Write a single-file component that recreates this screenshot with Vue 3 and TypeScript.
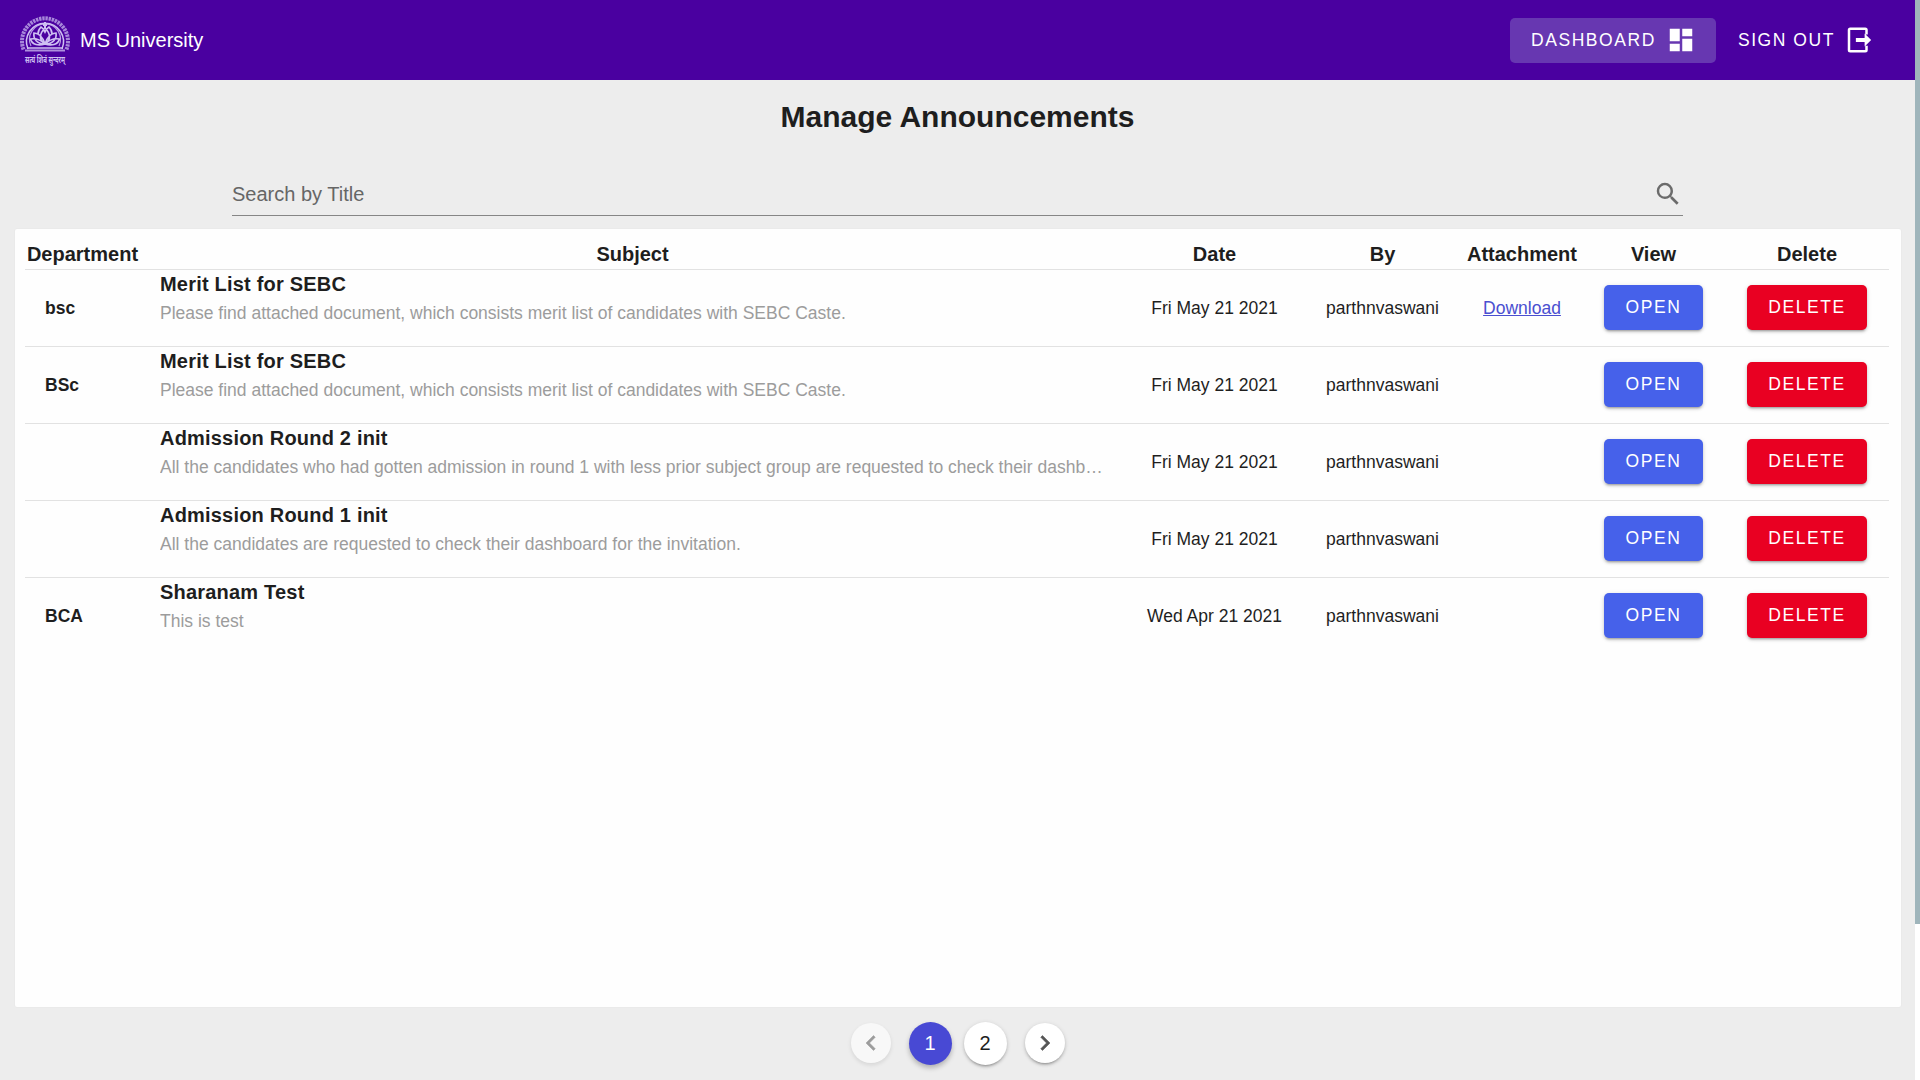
<script setup lang="ts">
import { ref } from 'vue'

interface Announcement {
  department: string
  title: string
  body: string
  date: string
  by: string
  attachment?: boolean
}

const search = ref('')
const page = ref(1)
const headers = ['Department', 'Subject', 'Date', 'By', 'Attachment', 'View', 'Delete']

const announcements: Announcement[] = [
  { department: 'bsc', title: 'Merit List for SEBC', body: 'Please find attached document, which consists merit list of candidates with SEBC Caste.', date: 'Fri May 21 2021', by: 'parthnvaswani', attachment: true },
  { department: 'BSc', title: 'Merit List for SEBC', body: 'Please find attached document, which consists merit list of candidates with SEBC Caste.', date: 'Fri May 21 2021', by: 'parthnvaswani' },
  { department: '', title: 'Admission Round 2 init', body: 'All the candidates who had gotten admission in round 1 with less prior subject group are requested to check their dashb…', date: 'Fri May 21 2021', by: 'parthnvaswani' },
  { department: '', title: 'Admission Round 1 init', body: 'All the candidates are requested to check their dashboard for the invitation.', date: 'Fri May 21 2021', by: 'parthnvaswani' },
  { department: 'BCA', title: 'Sharanam Test', body: 'This is test', date: 'Wed Apr 21 2021', by: 'parthnvaswani' },
]
</script>

<template>
  <div class="app">
    <div class="page">
      <header class="bar">
        <svg class="logo" viewBox="0 0 52 54" fill="none" stroke="#cfc0f2">
          <path d="M4.500 37.500 A23 23 0 1 1 47.500 37.500" stroke-width="4" stroke-dasharray="2.400 .8" opacity=".7" />
          <path d="M9 37 A18.500 18.500 0 1 1 43 37" stroke-width="1.500" />
          <path d="M12 34 A15.500 15.500 0 1 1 40 34" stroke-width="1.200" opacity=".8" />
          <path d="M8 36H44M6 38.500H46" stroke-width="2.200" opacity=".75" />
          <path d="M26 32C20 28 20 22 26 16C32 22 32 28 26 32ZM26 32C18 32 14 27 15 21C20 21 24 26 26 32ZM26 32C34 32 38 27 37 21C32 21 28 26 26 32ZM26 32C20 34 13 33 11.500 27C17 26 22 28 26 32ZM26 32C32 34 39 33 40.500 27C35 26 30 28 26 32ZM19 22C19 18 21 16 22 15C24 16 25 18 26 20C27 18 28 16 30 15C32 17 33 19 33 22" stroke-width="1.700" />
          <path d="M26 10V17M24 13H28" stroke-width="2" />
          <text x="26" y="50.500" text-anchor="middle" textLength="40" lengthAdjust="spacingAndGlyphs" class="motto">सत्यं शिवं सुन्दरम्</text>
        </svg>
        <span class="brand">MS University</span>
        <button class="nav active">
          <span>Dashboard</span>
          <svg viewBox="0 0 24 24"><path d="M13,3V9H21V3M13,21H21V11H13M3,21H11V15H3M3,13H11V3H3V13Z" /></svg>
        </button>
        <button class="nav signout">
          <span>Sign out</span>
          <svg viewBox="0 0 24 24"><path d="M17 2H5A2 2 0 0 0 3 4V20A2 2 0 0 0 5 22H17A2 2 0 0 0 19 20V16.500H17V20H5V4H17V7.500H19V4A2 2 0 0 0 17 2ZM16.500 6.800V10.400H9.500V13.600H16.500V17.200L21.700 12Z" /></svg>
        </button>
      </header>

      <h1>Manage Announcements</h1>

      <label class="search">
        <input v-model="search" type="text" placeholder="Search by Title" />
        <svg viewBox="0 0 24 24"><path d="M9.500,3A6.500,6.500 0 0,1 16,9.500C16,11.110 15.410,12.590 14.440,13.730L14.710,14H15.500L20.500,19L19,20.500L14,15.500V14.710L13.730,14.440C12.590,15.410 11.110,16 9.500,16A6.500,6.500 0 0,1 3,9.500A6.500,6.500 0 0,1 9.500,3M9.500,5C7,5 5,7 5,9.500C5,12 7,14 9.500,14C12,14 14,12 14,9.500C14,7 12,5 9.500,5Z" /></svg>
      </label>

      <section class="card">
        <div class="row head">
          <span v-for="h in headers" :key="h">{{ h }}</span>
        </div>
        <div v-for="(a, i) in announcements" :key="i" class="row item">
          <b class="dept">{{ a.department }}</b>
          <div class="subject">
            <div class="title">{{ a.title }}</div>
            <div class="body">{{ a.body }}</div>
          </div>
          <span>{{ a.date }}</span>
          <span>{{ a.by }}</span>
          <span><a v-if="a.attachment" href="#">Download</a></span>
          <span class="action"><button class="btn open">Open</button></span>
          <span class="action"><button class="btn delete">Delete</button></span>
        </div>
      </section>

      <nav class="pager">
        <button class="arrow disabled"><svg viewBox="0 0 24 24"><path d="M15.410,16.580L10.830,12L15.410,7.410L14,6L8,12L14,18L15.410,16.580Z" /></svg></button>
        <button v-for="n in 2" :key="n" class="num" :class="{ current: n === page }" @click="page = n">{{ n }}</button>
        <button class="arrow"><svg viewBox="0 0 24 24"><path d="M8.590,16.580L13.170,12L8.590,7.410L10,6L16,12L10,18L8.590,16.580Z" /></svg></button>
      </nav>
    </div>
    <div class="track"><div class="thumb"></div></div>
  </div>
</template>

<style>
body { margin: 0; overflow: hidden; }
</style>

<style scoped>
.app { display: flex; width: 1920px; height: 1080px; overflow: hidden; font-family: "Liberation Sans", Arial, sans-serif; color: #1e1e1e; }
.app * { box-sizing: border-box; }
button { border: 0; padding: 0; font: inherit; color: inherit; background: none; cursor: pointer; }
.page { width: 1915px; background: #ededed; display: flex; flex-direction: column; }
.track { width: 5px; background: #fff; }
.thumb { height: 924px; background: #9fb5bb; }
.bar { height: 80px; flex: none; background: #4a00a0; color: #fff; display: flex; align-items: center; padding: 0 20px 0 19px; }
.logo { width: 52px; height: 54px; flex: none; margin-bottom: 3px; overflow: visible; }
.motto { font: 700 10px "Noto Sans", sans-serif; fill: #cfc0f2; stroke: none; }
.brand { font-size: 20px; line-height: 24px; margin: 0 auto 1px 9px; }
.nav { height: 45px; display: flex; align-items: center; padding: 0 20px 0 21px; border-radius: 5px; font-size: 17.5px; letter-spacing: 1.5625px; text-transform: uppercase; }
.nav.active { background: #6737b1; }
.nav svg { width: 30px; height: 30px; margin-left: 10px; fill: #fff; }
.nav.signout { padding: 0 21px 0 22px; }
.signout svg { margin-left: 9px; }
h1 { margin: 17px 0 0; height: 40px; line-height: 40px; font-size: 30px; text-align: center; }
.search { width: 1451px; height: 41px; margin: 38px 0 0 232px; border-bottom: 1px solid #868686; display: flex; align-items: flex-start; }
.search input { flex: 1; height: 36px; border: 0; outline: 0; padding: 2px 0 0; background: none; font: 20px "Liberation Sans", Arial, sans-serif; color: #222; }
.search input::placeholder { color: #666; opacity: 1; }
.search svg { width: 30px; height: 30px; margin-top: 4px; fill: #6b6b6b; }
.card { margin: 13px 14px 0 15px; height: 778px; padding: 11px 12px 0 10px; background: #fefefe; border-radius: 2px; box-shadow: 0 0 2px rgba(0,0,0,.06); }
.row { display: grid; grid-template-columns: 115px 985px 179px 157px 122px 141px 166px; text-align: center; align-items: center; }
.head { height: 30px; font-weight: 700; font-size: 20px; border-bottom: 1px solid #e2e2e2; }
.item { height: 77px; font-size: 17.5px; border-bottom: 1px solid #e2e2e2; }
.item:last-child { border-bottom: 0; }
.dept { text-align: left; padding-left: 20px; }
.subject { align-self: start; text-align: left; padding: 0 20px; min-width: 0; }
.title { font-size: 20px; font-weight: 700; letter-spacing: .2px; line-height: 28px; }
.body { color: #9c9c9c; line-height: 30px; overflow: hidden; white-space: nowrap; text-overflow: ellipsis; }
.item a { color: #4a4fd0; text-decoration: underline; }
.action { padding-bottom: 2px; }
.btn { height: 45px; padding: 0 21.2px; border-radius: 5px; color: #fff; font-size: 17.5px; letter-spacing: 1.5625px; text-transform: uppercase; vertical-align: middle; box-shadow: 0 3px 2px -2px rgba(0,0,0,.2), 0 2px 3px rgba(0,0,0,.14), 0 1px 5px rgba(0,0,0,.12); }
.open { background: #4661ea; }
.delete { background: #e90022; }
.pager { display: flex; align-items: center; justify-content: center; height: 72px; }
.pager button { background: #fff; border-radius: 50%; display: flex; align-items: center; justify-content: center; box-shadow: 0 3px 2px -2px rgba(0,0,0,.2), 0 2px 3px rgba(0,0,0,.14), 0 1px 5px rgba(0,0,0,.12); }
.pager .arrow { width: 40px; height: 40px; margin: 0 12px; }
.pager .num { width: 43px; height: 43px; margin: 0 6px; font-size: 20px; }
.pager .current { background: #4849d4; color: #fff; box-shadow: 0 3px 5px rgba(0,0,0,.25); }
.arrow svg { width: 30px; height: 30px; fill: #555; stroke: #555; stroke-width: .4; }
.pager .disabled { background: #f8f8f8; box-shadow: 0 2px 4px rgba(0,0,0,.1); }
.disabled svg { fill: #9c9c9c; stroke: #9c9c9c; }
</style>
